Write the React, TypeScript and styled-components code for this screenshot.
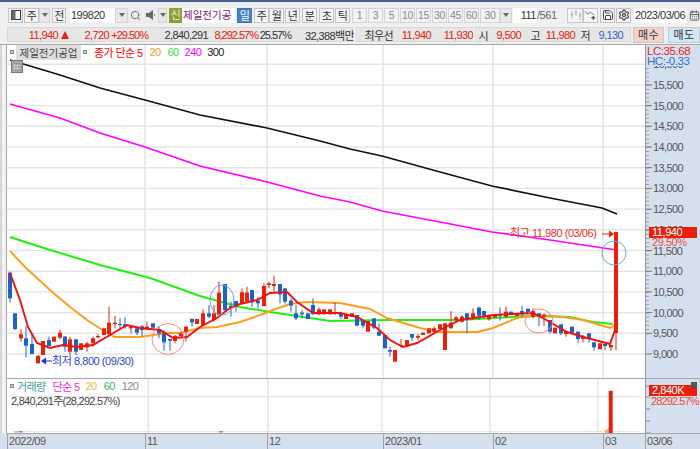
import React from 'react';
import styled, {createGlobalStyle} from "styled-components";
import {Search, Settings, Save, CalendarDays} from "lucide-react";

const RED = "#e8200c"
const BLUE = "#1f62c6"

type Raw = [number, number, number, number, number, "r" | "b"]

// candles read off the chart, grouped by the crop they were measured in (3x px)
const groups: { ox: number, oy: number, items: Raw[] }[] = [
    {
        ox: 0, oy: 230, items: [
            [30, 128, 205, 125, 218, "b"], [45, 250, 297, 250, 300, "b"], [63, 313, 325, 298, 335, "r"],
            [78, 325, 347, 288, 382, "b"], [96, 342, 372, 315, 372, "b"], [113, 378, 400, 375, 400, "r"],
            [128, 333, 375, 333, 375, "r"], [147, 330, 348, 320, 348, "b"], [162, 320, 335, 320, 335, "r"],
            [179, 308, 323, 300, 328, "r"], [196, 320, 350, 318, 365, "b"], [211, 328, 365, 320, 375, "r"],
            [228, 328, 365, 328, 375, "b"], [243, 340, 360, 340, 360, "r"], [261, 340, 352, 335, 365, "r"],
            [279, 325, 340, 320, 350, "r"], [294, 318, 322, 312, 325, "r"], [311, 295, 315, 295, 315, "r"],
            [328, 278, 312, 230, 320, "r"], [345, 278, 282, 258, 295, "r"], [360, 282, 285, 265, 300, "b"],
            [376, 283, 290, 262, 296, "b"], [393, 290, 295, 285, 310, "r"], [410, 295, 308, 290, 315, "b"],
            [426, 289, 300, 285, 320, "b"], [442, 290, 298, 275, 300, "r"], [459, 280, 293, 280, 293, "b"],
            [476, 298, 310, 290, 325, "b"], [492, 307, 337, 300, 362, "b"], [509, 327, 332, 327, 362, "b"],
            [526, 318, 333, 315, 340, "r"], [543, 310, 318, 305, 322, "r"], [558, 290, 305, 288, 335, "r"],
            [575, 267, 277, 265, 290, "b"], [592, 267, 282, 267, 282, "r"], [609, 250, 285, 238, 285, "r"],
            [626, 250, 260, 225, 265, "b"], [642, 250, 270, 225, 275, "r"], [658, 188, 255, 155, 255, "r"],
            [674, 162, 240, 162, 245, "b"], [692, 228, 235, 215, 260, "b"], [708, 213, 230, 213, 245, "b"],
        ]
    },
    {
        ox: 240, oy: 260, items: [
            [5, 97, 130, 85, 130, "r"], [20, 98, 125, 80, 130, "r"], [36, 90, 127, 90, 140, "b"],
            [53, 122, 130, 110, 145, "b"], [71, 78, 138, 70, 140, "r"], [86, 70, 75, 65, 85, "r"],
            [103, 72, 78, 47, 95, "r"], [119, 72, 103, 72, 130, "b"], [136, 85, 125, 85, 130, "b"],
            [153, 122, 137, 115, 155, "b"], [169, 160, 175, 135, 180, "b"], [186, 158, 163, 150, 175, "b"],
            [203, 160, 177, 160, 177, "b"], [219, 135, 162, 115, 165, "b"], [236, 148, 163, 142, 165, "r"],
            [252, 148, 163, 148, 163, "r"], [269, 148, 163, 148, 163, "r"], [286, 158, 160, 128, 165, "r"],
            [302, 160, 170, 155, 177, "b"], [319, 165, 177, 165, 177, "r"], [335, 160, 170, 160, 170, "r"],
            [351, 165, 197, 165, 197, "b"], [368, 182, 197, 182, 205, "b"], [384, 183, 215, 183, 215, "r"],
            [401, 175, 203, 175, 207, "b"], [418, 215, 227, 190, 227, "b"], [434, 225, 265, 225, 265, "b"],
            [451, 270, 275, 260, 290, "b"], [466, 270, 305, 270, 305, "r"], [484, 255, 258, 237, 262, "r"],
            [501, 240, 260, 240, 260, "r"], [516, 222, 233, 222, 243, "b"], [533, 228, 233, 222, 240, "r"],
            [549, 218, 225, 218, 225, "r"], [566, 205, 220, 205, 220, "r"], [583, 205, 215, 200, 220, "r"],
            [599, 193, 207, 193, 207, "r"], [616, 190, 270, 190, 270, "r"], [632, 188, 205, 153, 205, "r"],
            [649, 172, 180, 168, 185, "r"],
        ]
    },
    {
        ox: 460, oy: 200, items: [
            [5, 350, 365, 345, 368, "r"], [20, 340, 360, 340, 400, "b"], [38, 340, 352, 325, 360, "r"],
            [57, 323, 347, 320, 360, "b"], [71, 333, 347, 333, 355, "b"], [88, 348, 358, 348, 362, "r"],
            [104, 342, 352, 342, 352, "r"], [121, 342, 347, 322, 362, "b"], [138, 335, 350, 320, 355, "r"],
            [153, 335, 345, 335, 345, "b"], [170, 340, 348, 340, 348, "r"], [187, 333, 343, 318, 350, "b"],
            [203, 326, 338, 326, 338, "b"], [220, 333, 350, 325, 355, "r"], [237, 340, 350, 340, 378, "b"],
            [253, 345, 350, 340, 378, "r"], [269, 360, 395, 360, 400, "b"], [286, 383, 400, 383, 400, "r"],
            [303, 373, 400, 373, 405, "b"], [319, 393, 402, 393, 410, "r"], [336, 380, 398, 380, 398, "b"],
            [353, 395, 417, 395, 428, "b"], [369, 410, 417, 405, 428, "r"], [386, 400, 417, 400, 428, "b"],
            [402, 427, 442, 427, 452, "b"], [419, 430, 448, 430, 448, "r"], [436, 432, 438, 432, 450, "b"],
            [452, 435, 442, 435, 452, "r"],
        ]
    },
]

const candles = groups.flatMap(g => g.items.map(([x, t, b, wt, wb, c]) => ({
    x: Math.round(g.ox + x / 3),
    top: g.oy + t / 3,
    bottom: g.oy + b / 3,
    wickTop: g.oy + wt / 3,
    wickBottom: g.oy + wb / 3,
    color: c === "r" ? RED : BLUE,
})))

const black = "10,60 60,75 100,88 145,100 200,115 267,128 320,141 350,149 382,156 440,172 492,186 550,198 602,208 617,214"
const magenta = "10,104 60,118 100,133 145,147 200,166 267,182 320,196 350,202 382,211 440,222 492,232 550,240 610,249 616,250"
const green = "10,237 50,250 100,265 150,278 200,296 240,307 270,312 330,321 390,320 460,320 527,316 570,317 593,322 613,324"
const orange = "10,251 25,267 50,290 70,307 87,320 107,333 115,337 140,337 167,333 180,333 200,328 217,327 240,322 260,315 273,310 290,304 307,302 340,303 370,309 387,318 420,328 440,332 477,332 493,328 517,318 540,315 563,317 583,320 610,328 615,325"
const red5 = "10,273 20,300 28,327 37,343 50,348 63,345 77,347 93,345 110,335 127,325 140,328 160,330 173,338 187,337 200,327 217,318 230,308 240,304 257,300 270,293 287,292 297,302 313,313 340,313 357,317 377,328 390,340 403,347 417,343 440,330 460,320 493,315 533,313 550,322 567,332 587,338 610,344 615,330"

const gridY = Array.from({length: 15}, (_, i) => 354 - i * 20.7)
const gridX = [145, 267, 383, 493, 603]
const priceLabels = ["9,000", "9,500", "10,000", "10,500", "11,000", "11,500", "12,000", "12,500", "13,000", "13,500", "14,000", "14,500", "15,000", "15,500", "16,000"]
const smallTicks = Array.from({length: 70}, (_, i) => 48 + i * 4.14)

const GlobalStyle = createGlobalStyle`
    html, body {
        margin: 0;
        padding: 0;
        background: #f0f0f0;
    }
`

const Crumb = ({w = 10}: { w?: number }) => <Arrow $w={w}><i/></Arrow>

const App = () => {
    return (
        <Page>
            <GlobalStyle/>
            <TopStrip/>
            <Toolbar>
                <ToolButton $w={15}>
                    <svg width="12" height="12" viewBox="0 0 12 12">
                        <rect x="1.5" y="1.5" width="9" height="9" fill="#fff" stroke="#333"/>
                        <rect x="1.5" y="1.5" width="4" height="9" fill="#666"/>
                    </svg>
                </ToolButton>
                <ToolButton $w={15} $ml={1}>주</ToolButton>
                <Crumb w={11}/>
                <ToolButton $w={14} $ml={2}>전</ToolButton>
                <Field $w={45} $ml={4}>199820</Field>
                <Crumb w={13}/>
                <IconSlot $w={14}><Search size={11} color="#666" strokeWidth={2}/></IconSlot>
                <IconSlot $w={14} $ml={2}>
                    <svg width="12" height="12" viewBox="0 0 12 12">
                        <path d="M1 4h3l4-3v10L4 8H1z" fill="#666"/>
                        <path d="M9.5 5v2" stroke="#999"/>
                    </svg>
                </IconSlot>
                <Crumb w={9}/>
                <NewBadge $ml={2}>신</NewBadge>
                <StockName>제일전기공</StockName>
                <ToolButton $w={15} $ml={2} $active>일</ToolButton>
                <ToolButton $w={15} $ml={2}>주</ToolButton>
                <ToolButton $w={15}>월</ToolButton>
                <ToolButton $w={15} $ml={1}>년</ToolButton>
                <ToolButton $w={15} $ml={2}>분</ToolButton>
                <ToolButton $w={15} $ml={2}>초</ToolButton>
                <ToolButton $w={15} $ml={1}>틱</ToolButton>
                <PeriodRow>
                    {["1", "3", "5", "10", "15", "30", "45", "60"].map((p, i) => (
                        <PeriodButton key={i}>{p}</PeriodButton>
                    ))}
                </PeriodRow>
                <PeriodButton $w={20} $ml={1}>30</PeriodButton>
                <Crumb w={12}/>
                <Field $w={24} $ml={1} $right>111</Field>
                <PageTotal>/561</PageTotal>
                <ToolButton $w={16} $ml={9} $faint>
                    <svg width="13" height="12" viewBox="0 0 13 12">
                        <path d="M3 2v8M7 1v6M11 3v8" stroke="#bbb"/>
                        <path d="M2 4h2v3H2zM6 2h2v3H6zM10 5h2v3h-2z" fill="#bbb"/>
                    </svg>
                </ToolButton>
                <ToolButton $w={15}>
                    <svg width="14" height="12" viewBox="0 0 14 12">
                        <path d="M1 2l3 3 3-2 4 3" fill="none" stroke="#777"/>
                        <path d="M10 7v4M8 9h4" stroke="#555" strokeWidth="1.5"/>
                    </svg>
                </ToolButton>
                <ToolButton $w={15} $ml={2}><Save size={12} color="#444"/></ToolButton>
                <ToolButton $w={15} $ml={1}><Settings size={12} color="#555" strokeWidth={2.6}/></ToolButton>
                <Field $w={53} $ml={3}>2023/03/06</Field>
                <IconSlot $w={14}><CalendarDays size={11} color="#555"/></IconSlot>
            </Toolbar>
            <InfoBar>
                <InfoPanel>
                    <InfoValue $w={50} $color={RED}>11,940</InfoValue>
                    <UpMark/>
                    <InfoValue $w={40} $color={RED}>2,720</InfoValue>
                    <InfoValue $w={39} $color={RED} $tight>+29.50%</InfoValue>
                    <InfoValue $w={60}>2,840,291</InfoValue>
                    <InfoValue $w={50} $color={RED} $tight>8,292.57%</InfoValue>
                    <InfoValue $w={33} $tight>25.57%</InfoValue>
                    <InfoValue $w={63}>32,388백만</InfoValue>
                    <InfoValue $w={38} $sep>최우선</InfoValue>
                    <InfoValue $w={38} $color={RED}>11,940</InfoValue>
                    <InfoValue $w={42} $color={RED}>11,930</InfoValue>
                    <InfoValue $w={14} $sep>시</InfoValue>
                    <InfoValue $w={33} $color={RED}>9,500</InfoValue>
                    <InfoValue $w={19}>고</InfoValue>
                    <InfoValue $w={35} $color={RED}>11,980</InfoValue>
                    <InfoValue $w={15}>저</InfoValue>
                    <InfoValue $w={33} $color="#2c62c8">9,130</InfoValue>
                </InfoPanel>
                <TradeButton $bg="#f4d2ca" $w={31} $ml={2}>매수</TradeButton>
                <TradeButton $bg="#d2e6f6" $w={32} $ml={4}>매도</TradeButton>
            </InfoBar>
            <ChartGrid>
                <LeftRail/>
                <PricePane>
                    <Legend>
                        <LegendDot/>
                        <StockTag>제일전기공업</StockTag>
                        <LegendDot/>
                        <LegendText $color="#f00" $ml={7}>종가 단순 5</LegendText>
                        <LegendText $color="#f5a030" $ml={7}>20</LegendText>
                        <LegendText $color="#3ee03e" $ml={7}>60</LegendText>
                        <LegendText $color="#f0f" $ml={6}>240</LegendText>
                        <LegendText $color="#222" $ml={6}>300</LegendText>
                    </Legend>
                    <GridChip>
                        <svg width="12" height="13" viewBox="0 0 12 13">
                            <rect x="0.5" y="0.5" width="11" height="12" fill="#aaa" stroke="#777"/>
                            <path d="M2 4h8v6H2zM2 7h8M5 4v6M8 4v6" fill="#ddd" stroke="#777" strokeWidth="0.6"/>
                        </svg>
                    </GridChip>
                    <PlotSvg viewBox="7 45 638 333" width="638" height="333">
                        {gridY.map(y => <line key={y} x1="7" x2="645" y1={y} y2={y} stroke="#e4e4e4" strokeWidth="1.4"/>)}
                        {gridX.map(x => <line key={x} x1={x} x2={x} y1="45" y2="378" stroke="#e2e2e2" strokeWidth="1.4"/>)}
                        <polyline points={black} fill="none" stroke="#111" strokeWidth="1.7"/>
                        <polyline points={magenta} fill="none" stroke="#f0f" strokeWidth="1.7"/>
                        <polyline points={green} fill="none" stroke="#22ee11" strokeWidth="2"/>
                        <polyline points={orange} fill="none" stroke="#ff9d1e" strokeWidth="1.9"/>
                        {candles.map((c, i) => (
                            <g key={i}>
                                <line x1={c.x} x2={c.x} y1={c.wickTop} y2={c.wickBottom} stroke={c.color} strokeWidth="1"/>
                                <rect x={c.x - 2} y={c.top} width="4" height={Math.max(c.bottom - c.top, 1)} fill={c.color}/>
                            </g>
                        ))}
                        <line x1="616" x2="616" y1="333" y2="350" stroke={RED} strokeWidth="1"/>
                        <rect x="614" y="232" width="4" height="101" fill={RED}/>
                        <polyline points={red5} fill="none" stroke="#f01010" strokeWidth="1.9"/>
                        <ellipse cx="168" cy="339" rx="16" ry="15.5" fill="none" stroke="#f58a8a" strokeWidth="1"/>
                        <ellipse cx="539" cy="321" rx="14" ry="12" fill="none" stroke="#f58a8a" strokeWidth="1"/>
                        <ellipse cx="222" cy="300" rx="12" ry="15" fill="none" stroke="#66aaee" strokeWidth="1"/>
                        <circle cx="614" cy="253" r="12" fill="none" stroke="#66aaee" strokeWidth="1"/>
                        <ChartNote x="510" y="237" fill="#f03030">최고 11,980 (03/06)</ChartNote>
                        <path d="M602 234h8" stroke={RED}/>
                        <path d="M609 230.500l5 3.500-5 3.500z" fill={RED}/>
                        <ChartNote x="52" y="365" fill="#2a3fd0">최저 8,800 (09/30)</ChartNote>
                        <path d="M45 361h7" stroke="#1a2fe0"/>
                        <path d="M46 357.500l-5 3.500 5 3.500z" fill="#1a2fe0"/>
                    </PlotSvg>
                </PricePane>
                <PriceAxis>
                    <AxisSvg viewBox="645 45 55 333" width="55" height="333">
                        {smallTicks.map(y => <line key={y} x1="646" x2="649" y1={y} y2={y} stroke="#999"/>)}
                        {gridY.map((y, i) => (
                            <g key={y}>
                                <line x1="646" x2="652" y1={y} y2={y} stroke="#777"/>
                                <AxisText x="653" y={y + 4}>{priceLabels[i]}</AxisText>
                            </g>
                        ))}
                    </AxisSvg>
                    <HighLow>
                        <HighLowLine $color="#f02020">LC:35.68</HighLowLine>
                        <HighLowLine $color="#2a70e0">HC:-0.33</HighLowLine>
                    </HighLow>
                    <PriceTag $top={182}>11,940</PriceTag>
                    <TagCaption $top={192}>29.50%</TagCaption>
                </PriceAxis>
                <LeftRail/>
                <VolumePane>
                    <Legend>
                        <LegendDot/>
                        <LegendText $color="#3aa0a0" $ml={3}>거래량</LegendText>
                        <LegendText $color="#ee30d0" $ml={7}>단순 5</LegendText>
                        <LegendText $color="#f5b840" $ml={6}>20</LegendText>
                        <LegendText $color="#45b070" $ml={7}>60</LegendText>
                        <LegendText $color="#888" $ml={7}>120</LegendText>
                    </Legend>
                    <VolumeNote>2,840,291주(28,292.57%)</VolumeNote>
                    <PlotSvg viewBox="7 379 638 55" width="638" height="54">
                        <line x1="7" x2="645" y1="397" y2="397" stroke="#e4e4e4" strokeWidth="1.4"/>
                        <line x1="7" x2="645" y1="432.500" y2="432.500" stroke="#e4e4e4"/>
                        {gridX.map(x => <line key={x} x1={x} x2={x} y1="379" y2="434" stroke="#e2e2e2" strokeWidth="1.4"/>)}
                        <rect x="13" y="432" width="4" height="1.500" fill="#d86a5a"/>
                        <rect x="217" y="432" width="4" height="1.500" fill="#d86a5a"/>
                        <rect x="9" y="432.500" width="3" height="1" fill="#6a8ad8"/>
                        <path d="M610 434l4-6v6z" fill="#e888d8"/>
                        <rect x="610" y="431" width="3" height="3" fill="#f5b840"/>
                        <rect x="614" y="391" width="4" height="43" fill={RED}/>
                    </PlotSvg>
                </VolumePane>
                <PriceAxis>
                    <AxisSvg viewBox="645 379 55 55" width="55" height="55">
                        {[386, 397, 409, 421, 433].map(y => (
                            <line key={y} x1="646" x2="650" y1={y} y2={y} stroke="#888"/>
                        ))}
                    </AxisSvg>
                    <PriceTag $top={6}>2,840K</PriceTag>
                    <TagCaption $top={17} $tight>28292.57%</TagCaption>
                    <MiniClose/>
                </PriceAxis>
                <TimeAxis>
                    {[
                        {label: "2022/09", w: 138},
                        {label: "11", w: 122},
                        {label: "12", w: 116},
                        {label: "2023/01", w: 110},
                        {label: "02", w: 110},
                        {label: "03", w: 42},
                    ].map(t => <TimeCell key={t.label} $w={t.w}>{t.label}</TimeCell>)}
                    <TimeCell $w={55}>03/06</TimeCell>
                </TimeAxis>
            </ChartGrid>
        </Page>
    );
};

export default App;

const Page = styled.div`
    display: flex;
    flex-direction: column;
    width: 700px;
    height: 449px;
    overflow: hidden;
    background: #f0f0f0;
    font-family: "Liberation Sans", "Noto Sans CJK KR", sans-serif;
    font-size: 11px;
    letter-spacing: -0.45px;
    color: #333;
`

const TopStrip = styled.div`
    height: 2px;
    background: #45608f;
`

const Toolbar = styled.div`
    display: flex;
    align-items: center;
    height: 23px;
    padding: 3px 0 0 8px;
    box-sizing: border-box;
    white-space: nowrap;
`

const ToolButton = styled.div<{ $w: number, $ml?: number, $active?: boolean, $faint?: boolean }>`
    display: flex;
    align-items: center;
    justify-content: center;
    flex: none;
    width: ${p => p.$w}px;
    height: 15px;
    margin-left: ${p => p.$ml || 0}px;
    box-sizing: border-box;
    border: 1px solid ${p => p.$active ? "#3f74b8" : "#c4c4c4"};
    background: ${p => p.$active ? "#4a82c4" : "#f4f4f4"};
    color: ${p => p.$active ? "#fff" : "#333"};
    opacity: ${p => p.$faint ? 0.85 : 1};
`

const IconSlot = styled(ToolButton)`
    border-color: transparent;
    background: #ececec;
`

const Arrow = styled.div<{ $w: number }>`
    display: flex;
    align-items: center;
    justify-content: center;
    flex: none;
    width: ${p => p.$w}px;
    height: 15px;
    box-sizing: border-box;
    background: #e8e8e8;
    border: 1px solid #d4d4d4;

    i {
        border-left: 3px solid transparent;
        border-right: 3px solid transparent;
        border-top: 4px solid #666;
    }
`

const Field = styled.div<{ $w: number, $ml?: number, $right?: boolean }>`
    flex: none;
    width: ${p => p.$w}px;
    height: 15px;
    margin-left: ${p => p.$ml || 0}px;
    padding: 0 1px;
    box-sizing: border-box;
    line-height: 15px;
    background: #fff;
    text-align: ${p => p.$right ? "right" : "left"};
    letter-spacing: -0.5px;
`

const NewBadge = styled.div<{ $ml?: number }>`
    flex: none;
    width: 13px;
    height: 15px;
    margin-left: ${p => p.$ml || 0}px;
    line-height: 15px;
    text-align: center;
    background: #8f9e3c;
    color: #e6ecc0;
`

const StockName = styled.div`
    flex: none;
    width: 53px;
    height: 15px;
    line-height: 15px;
    padding-left: 1px;
    box-sizing: border-box;
    background: #fff;
    color: #7c1668;
    letter-spacing: 0;
    font-size: 10.5px;
`

const PeriodRow = styled.div`
    display: flex;
    margin-left: 2px;
    gap: 1px;
`

const PeriodButton = styled.div<{ $w?: number, $ml?: number }>`
    flex: none;
    width: ${p => p.$w || 15}px;
    height: 15px;
    margin-left: ${p => p.$ml || 0}px;
    box-sizing: border-box;
    border: 1px solid #d4d4d4;
    background: #f2f2f2;
    color: #888;
    line-height: 13px;
    text-align: center;
    font-size: 10.5px;
`

const PageTotal = styled.span`
    flex: none;
    width: 21px;
    color: #666;
`

const InfoBar = styled.div`
    display: flex;
    align-items: center;
    height: 20px;
    padding-left: 7px;
    border-bottom: 1px solid #a8a8a8;
    box-sizing: border-box;
`

const InfoPanel = styled.div`
    display: flex;
    align-items: center;
    flex: none;
    width: 624px;
    height: 15px;
    background: #e6e6e6;
    border: 1px solid #d8d8d8;
    box-sizing: border-box;
    letter-spacing: -0.6px;
`

const InfoValue = styled.span<{ $w: number, $color?: string, $sep?: boolean, $tight?: boolean }>`
    flex: none;
    width: ${p => p.$w}px;
    text-align: right;
    white-space: nowrap;
    color: ${p => p.$color || "#333"};
    border-left: ${p => p.$sep ? "1px solid #f6f6f6" : "none"};
    box-sizing: content-box;
    letter-spacing: ${p => p.$tight ? "-1px" : "inherit"};
`

const UpMark = styled.i`
    flex: none;
    width: 0;
    height: 0;
    margin-left: 3px;
    border-left: 4px solid transparent;
    border-right: 4px solid transparent;
    border-bottom: 8px solid ${RED};
`

const TradeButton = styled.div<{ $bg: string, $w: number, $ml: number }>`
    flex: none;
    width: ${p => p.$w}px;
    height: 16px;
    margin-left: ${p => p.$ml}px;
    background: ${p => p.$bg};
    border: 1px solid #c9c9c9;
    box-sizing: border-box;
    line-height: 14px;
    text-align: center;
    letter-spacing: 0.5px;
`

const ChartGrid = styled.div`
    display: grid;
    grid-template-columns: 7px 638px 55px;
    grid-template-rows: 334px 55px 15px;
`

const LeftRail = styled.div`
    background: linear-gradient(90deg, #d6d6d6 0 2px, #f2f2f2 2px 6px, #a9a9a9 6px 7px);
`

const PricePane = styled.div`
    position: relative;
    background: #fff;
    border-bottom: 1px solid #a8a8a8;
`

const VolumePane = styled.div`
    position: relative;
    background: #fff;
    border-bottom: 1px solid #a8a8a8;
`

const PlotSvg = styled.svg`
    display: block;
`

const Legend = styled.div`
    position: absolute;
    z-index: 2;
    top: 1px;
    left: 3px;
    display: flex;
    align-items: center;
    height: 12px;
    white-space: nowrap;
    letter-spacing: -0.6px;
`

const LegendDot = styled.i`
    flex: none;
    width: 4px;
    height: 4px;
    border: 1px solid #888;
    background: #ccc;
    box-sizing: border-box;
`

const StockTag = styled.span`
    margin: 0 2px;
    width: 65px;
    text-align: center;
    background: #dedede;
    color: #444;
    letter-spacing: 0;
    font-size: 10.5px;
`

const LegendText = styled.span<{ $color: string, $ml: number }>`
    margin-left: ${p => p.$ml}px;
    color: ${p => p.$color};
`

const GridChip = styled.div`
    position: absolute;
    z-index: 3;
    top: 15px;
    left: 4px;
    line-height: 0;
`

const VolumeNote = styled.div`
    position: absolute;
    z-index: 2;
    top: 13px;
    left: 4px;
    color: #444;
    letter-spacing: -0.75px;
`

const ChartNote = styled.text`
    font-size: 11px;
    letter-spacing: -0.45px;
`

const PriceAxis = styled.div`
    position: relative;
    background: #d5e0ee;
    border-bottom: 1px solid #a8a8a8;
    border-left: 1px solid #999;
    box-sizing: border-box;
    overflow: hidden;
`

const AxisSvg = styled.svg`
    display: block;
    margin-left: -1px;
`

const AxisText = styled.text`
    font-size: 11px;
    letter-spacing: -0.6px;
    fill: #555;
`

const HighLow = styled.div`
    position: absolute;
    top: 0;
    left: 0;
    right: 0;
    padding: 1px 0 0 1px;
    background: #d5e0ee;
`

const HighLowLine = styled.div<{ $color: string }>`
    height: 10px;
    line-height: 10px;
    font-size: 11.5px;
    color: ${p => p.$color};
`

const PriceTag = styled.div<{ $top: number }>`
    position: absolute;
    top: ${p => p.$top}px;
    left: 3px;
    width: 48px;
    height: 11px;
    padding-left: 3px;
    box-sizing: border-box;
    line-height: 11px;
    background: ${RED};
    color: #fff;
`

const TagCaption = styled.div<{ $top: number, $tight?: boolean }>`
    position: absolute;
    top: ${p => p.$top}px;
    left: ${p => p.$tight ? 5 : 6}px;
    line-height: 11px;
    color: #ee4a3a;
    letter-spacing: ${p => p.$tight ? -0.9 : -0.45}px;
`

const MiniClose = styled.i`
    position: absolute;
    top: 3px;
    right: 3px;
    width: 6px;
    height: 6px;
    background: #555;
`

const TimeAxis = styled.div`
    grid-column: 1 / -1;
    display: flex;
    padding-left: 7px;
    background: #d5e0ee;
    line-height: 15px;
    color: #555;
`

const TimeCell = styled.div<{ $w: number }>`
    flex: none;
    width: ${p => p.$w}px;
    box-sizing: border-box;
    padding-left: 1px;
    border-left: 1px solid #9aa4b0;
`
